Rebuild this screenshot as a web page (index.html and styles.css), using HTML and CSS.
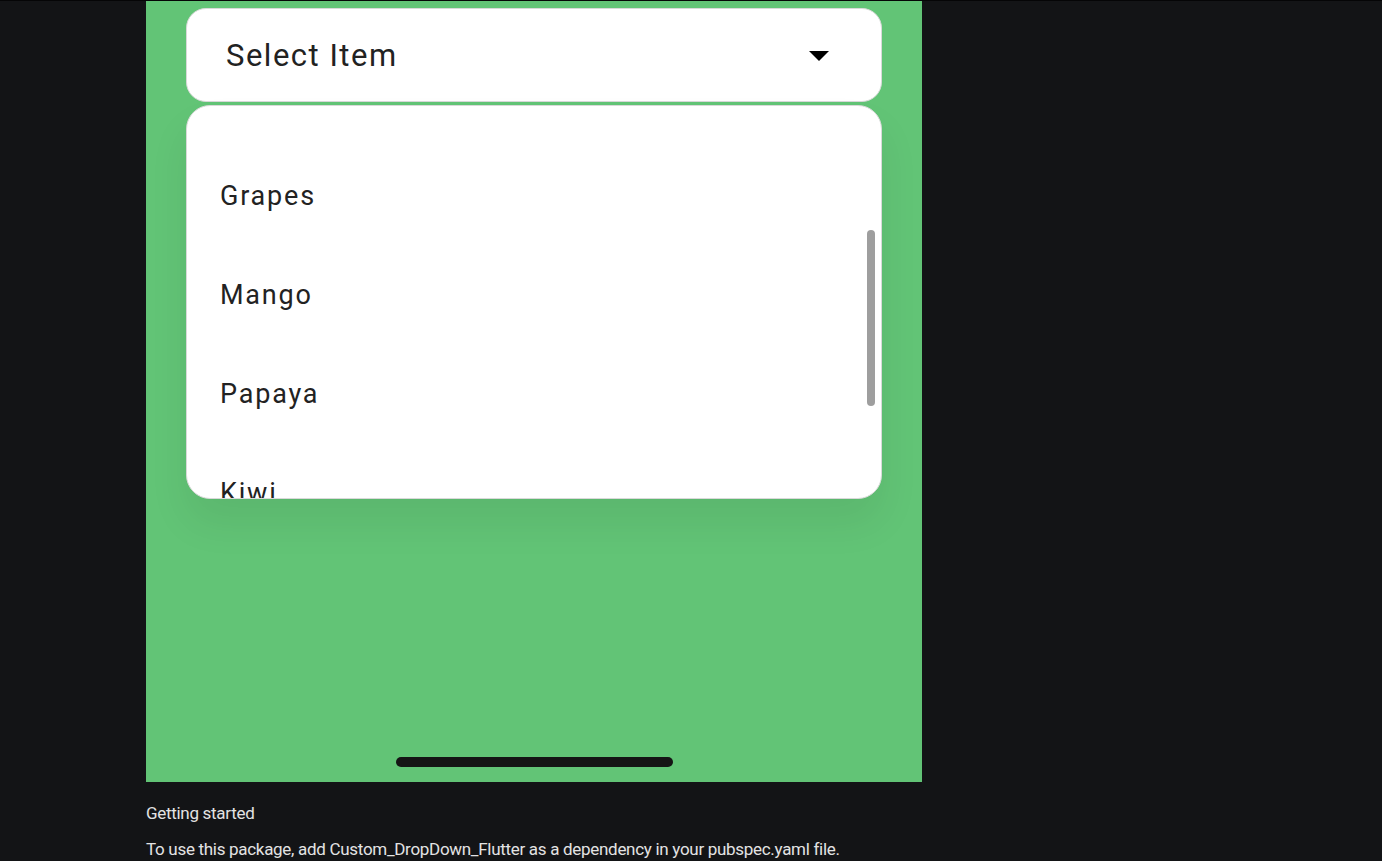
FILE: index.html
```html
<!DOCTYPE html>
<html>
<head>
<meta charset="utf-8">
<link rel="stylesheet" href="styles.css">
</head>
<body>
<div class="page">
  <div class="phone">
    <div class="select">
      <span class="select-label">Select Item</span>
      <span class="caret"></span>
    </div>
    <div class="list">
      <div class="list-inner">
        <div class="item">Grapes</div>
        <div class="item">Mango</div>
        <div class="item">Papaya</div>
        <div class="item">Kiwi</div>
      </div>
      <div class="scrollbar"></div>
    </div>
    <div class="spacer"></div>
    <div class="home"></div>
  </div>
  <p class="text first">Getting started</p>
  <p class="text">To use this package, add Custom_DropDown_Flutter as a dependency in your pubspec.yaml file.</p>
</div>
</body>
</html>
```
FILE: styles.css
```css
html, body {
  margin: 0;
  padding: 0;
  background: #131416;
  height: 100%;
  overflow: hidden;
}
body {
  border-top: 1px solid #050506;
  font-family: Roboto, "Liberation Sans", sans-serif;
}
.page {
  padding-left: 146px;
}
.phone {
  width: 776px;
  height: 781px;
  background: #62c476;
  box-sizing: border-box;
  padding: 7px 40px 15px;
  display: flex;
  flex-direction: column;
}
.select {
  height: 94px;
  box-sizing: border-box;
  background: #fff;
  border: 1.5px solid #d9d9d9;
  border-radius: 20px;
  display: flex;
  align-items: center;
  justify-content: space-between;
  padding: 0 52px 0 39px;
}
.select-label {
  font-size: 31px;
  color: #222;
  letter-spacing: 1.5px;
}
.caret {
  width: 0;
  height: 0;
  border-left: 10px solid transparent;
  border-right: 10px solid transparent;
  border-top: 10px solid #000;
  margin-top: 2px;
}
.list {
  margin-top: 3px;
  height: 394px;
  box-sizing: border-box;
  background: #fff;
  border: 1.5px solid #d9d9d9;
  border-radius: 24px;
  position: relative;
  overflow: hidden;
  box-shadow: 0 24px 40px rgba(0, 0, 0, 0.07);
}
.list-inner {
  padding-top: 40px;
}
.item {
  height: 99px;
  display: flex;
  align-items: center;
  padding-left: 33px;
  font-size: 27px;
  color: #222;
  letter-spacing: 1.8px;
}
.scrollbar {
  position: absolute;
  right: 6px;
  top: 124px;
  width: 8px;
  height: 176px;
  border-radius: 4px;
  background: #9e9e9e;
}
.spacer {
  flex: 1;
}
.home {
  align-self: center;
  width: 277px;
  height: 10px;
  border-radius: 5px;
  background: #151515;
}
.text {
  margin: 0;
  color: #e3e3e3;
  font-size: 17px;
  line-height: 20px;
  letter-spacing: -0.3px;
}
.text.first {
  margin-top: 21px;
  margin-bottom: 16px;
}
```
